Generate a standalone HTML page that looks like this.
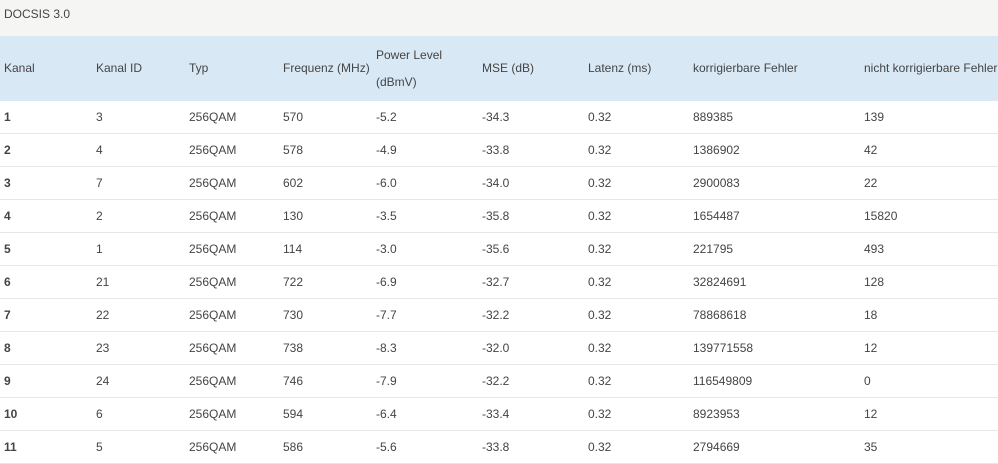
<!DOCTYPE html>
<html><head><style>
body{margin:0;width:998px;height:460px;overflow:hidden;background:#fff;font-family:"Liberation Sans",sans-serif;font-size:12px;color:#444;}
.top{height:36px;background:#f5f5f4;line-height:28px;padding-left:4px;}
.r{display:flex;height:33px;box-sizing:border-box;border-bottom:1px solid #e6e6e6;line-height:33px;}
.h{display:flex;height:65px;background:#d9e8f5;align-items:center;line-height:27px;}
.r>div,.h>div{padding-left:4px;box-sizing:border-box;white-space:nowrap;}
.r>div:first-child{font-weight:bold;}
.c1{width:92px}.c2{width:93px}.c3{width:94px}.c4{width:93px}.c5{width:106px}.c6{width:106px}.c7{width:105px}.c8{width:171px}.c9{width:138px}
</style></head><body>
<div class="top">DOCSIS 3.0</div>
<div class="h"><div class="c1">Kanal</div><div class="c2">Kanal ID</div><div class="c3">Typ</div><div class="c4">Frequenz (MHz)</div><div class="c5">Power Level<br>(dBmV)</div><div class="c6">MSE (dB)</div><div class="c7">Latenz (ms)</div><div class="c8">korrigierbare Fehler</div><div class="c9">nicht korrigierbare Fehler</div></div>
<div class="r"><div class="c1">1</div><div class="c2">3</div><div class="c3">256QAM</div><div class="c4">570</div><div class="c5">-5.2</div><div class="c6">-34.3</div><div class="c7">0.32</div><div class="c8">889385</div><div class="c9">139</div></div>
<div class="r"><div class="c1">2</div><div class="c2">4</div><div class="c3">256QAM</div><div class="c4">578</div><div class="c5">-4.9</div><div class="c6">-33.8</div><div class="c7">0.32</div><div class="c8">1386902</div><div class="c9">42</div></div>
<div class="r"><div class="c1">3</div><div class="c2">7</div><div class="c3">256QAM</div><div class="c4">602</div><div class="c5">-6.0</div><div class="c6">-34.0</div><div class="c7">0.32</div><div class="c8">2900083</div><div class="c9">22</div></div>
<div class="r"><div class="c1">4</div><div class="c2">2</div><div class="c3">256QAM</div><div class="c4">130</div><div class="c5">-3.5</div><div class="c6">-35.8</div><div class="c7">0.32</div><div class="c8">1654487</div><div class="c9">15820</div></div>
<div class="r"><div class="c1">5</div><div class="c2">1</div><div class="c3">256QAM</div><div class="c4">114</div><div class="c5">-3.0</div><div class="c6">-35.6</div><div class="c7">0.32</div><div class="c8">221795</div><div class="c9">493</div></div>
<div class="r"><div class="c1">6</div><div class="c2">21</div><div class="c3">256QAM</div><div class="c4">722</div><div class="c5">-6.9</div><div class="c6">-32.7</div><div class="c7">0.32</div><div class="c8">32824691</div><div class="c9">128</div></div>
<div class="r"><div class="c1">7</div><div class="c2">22</div><div class="c3">256QAM</div><div class="c4">730</div><div class="c5">-7.7</div><div class="c6">-32.2</div><div class="c7">0.32</div><div class="c8">78868618</div><div class="c9">18</div></div>
<div class="r"><div class="c1">8</div><div class="c2">23</div><div class="c3">256QAM</div><div class="c4">738</div><div class="c5">-8.3</div><div class="c6">-32.0</div><div class="c7">0.32</div><div class="c8">139771558</div><div class="c9">12</div></div>
<div class="r"><div class="c1">9</div><div class="c2">24</div><div class="c3">256QAM</div><div class="c4">746</div><div class="c5">-7.9</div><div class="c6">-32.2</div><div class="c7">0.32</div><div class="c8">116549809</div><div class="c9">0</div></div>
<div class="r"><div class="c1">10</div><div class="c2">6</div><div class="c3">256QAM</div><div class="c4">594</div><div class="c5">-6.4</div><div class="c6">-33.4</div><div class="c7">0.32</div><div class="c8">8923953</div><div class="c9">12</div></div>
<div class="r"><div class="c1">11</div><div class="c2">5</div><div class="c3">256QAM</div><div class="c4">586</div><div class="c5">-5.6</div><div class="c6">-33.8</div><div class="c7">0.32</div><div class="c8">2794669</div><div class="c9">35</div></div>
</body></html>
